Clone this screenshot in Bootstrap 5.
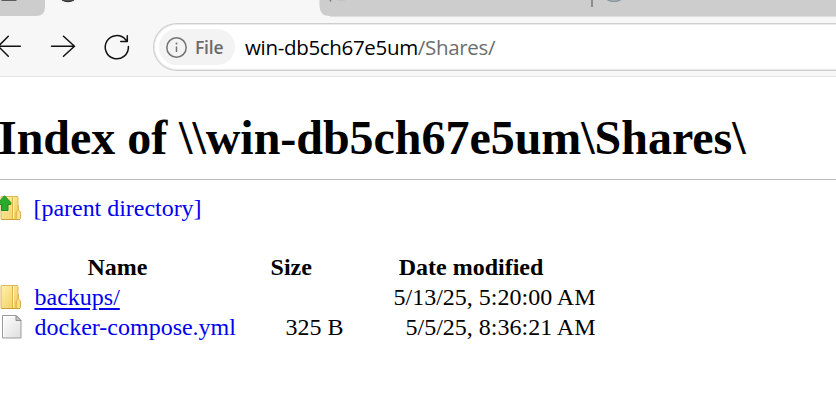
<!DOCTYPE html>
<html lang="en">
<head>
<meta charset="utf-8">
<meta name="viewport" content="width=device-width, initial-scale=1">
<title>Index of \\win-db5ch67e5um\Shares\</title>
<link href="https://cdn.jsdelivr.net/npm/bootstrap@5.3.0/dist/css/bootstrap.min.css" rel="stylesheet">
<style>
body{width:836px;height:414px;background:#fff;color:#000;font-family:"Liberation Serif","Times New Roman",serif;font-size:24px;line-height:30px}
.browser{height:77px;background:#f7f7f7;border-bottom:1px solid #e5e5e5}
.tabs{height:23px}
.tabs svg{display:block}
.tools{height:53px}
.address{width:700px;height:48px;background:#fff;border:1px solid #cecece;box-shadow:inset 0 0 0 1px #e9e9e9;border-radius:24px 0 0 24px;border-right:0;margin-right:-20px;padding-left:5px;font-family:"Open Sans","Noto Sans",sans-serif}
.scheme{width:76px;height:36px;background:#f3f3f3;border-radius:18px;padding-left:7px;color:#6b6b6b}
.scheme span{font-size:17.5px;font-weight:600;line-height:36px;margin-left:8px;letter-spacing:-.2px}
.url{font-size:20.5px;margin-left:10px;letter-spacing:-.32px;white-space:nowrap}
.url span{color:#6d6d6d}
.title{font-size:48px;font-weight:700;line-height:56px;margin:33px 0 13px -2px;padding:0;white-space:nowrap;letter-spacing:-.03px}
.rule{border-top:1px solid #bdbdbd;height:14px}
.listing a{color:#0000ee;text-decoration:none}
.listing a.current{text-decoration:underline;text-decoration-thickness:2px;text-underline-offset:3px}
.icon{width:22px;height:26px;flex:none}
.entry{margin-left:12.500px}
.parent{margin-left:11.500px;letter-spacing:-.03px}
.files{width:595.500px;table-layout:fixed;margin:29px 0 0;color:#000;line-height:30px}
.files th,.files td{padding:0;height:30px;color:#000;white-space:nowrap}
.files th:last-child{padding-left:3px}
</style>
<script src="https://cdn.jsdelivr.net/npm/bootstrap@5.3.0/dist/js/bootstrap.bundle.min.js"></script>
</head>
<body class="overflow-hidden">
<svg width="0" height="0" class="position-absolute" aria-hidden="true">
  <defs>
    <linearGradient id="gold" x1="0" x2="1" y2="1"><stop stop-color="#fdf0b0"/><stop offset="1" stop-color="#f1cc5c"/></linearGradient>
    <linearGradient id="paper" x1="0" x2="1" y2="1"><stop stop-color="#fff"/><stop offset="1" stop-color="#dedede"/></linearGradient>
    <symbol id="folder" viewBox="0 0 22 26">
      <path d="M17 10.500h1.500v4.500l2 2v6.500l-1 1h-3.500z" fill="#f8e08a" stroke="#dab04c"/>
      <path d="M2 1.500h15q1 0 1 1v12.500l-2 2v7.500h-14q-1 0-1-1v-21q0-1 1-1z" fill="url(#gold)" stroke="#deb95a"/>
      <path d="M12.500 2v22" stroke="#dfb54c"/><path d="M13.500 2.500v21" stroke="#fdf3c4"/><path d="M1.500 24.500h18.500" stroke="#cc9f3d"/>
    </symbol>
  </defs>
</svg>
<header class="browser d-flex flex-column">
  <div class="tabs">
    <svg width="836" height="17" viewBox="0 0 836 17" aria-hidden="true">
      <path d="M0 0H45V7Q45 16 36 16H0zM319.500 0H836V16H330Q319.500 16 319.500 6z" fill="#cdcdcd"/>
      <path d="M1.500 0h15" stroke="#5b5b5b" stroke-width="2"/>
      <path d="M62 0q6 3.300 12 0" fill="#555" stroke="#333" stroke-width="1.200"/>
      <path d="M330.500 0v1.500" stroke="#777" stroke-width="1.500"/>
      <path d="M337 .3h8" stroke="#c2c2c2"/>
      <path d="M592 0v7" stroke="#777" stroke-width="1.500"/>
      <path d="M607.500 0q6.500 3 13 0" fill="#a3adb3" stroke="#84949e" stroke-width="1.200"/>
      <path d="M330 16.500H836" stroke="#dedede"/>
    </svg>
  </div>
  <div class="tools d-flex align-items-start">
    <svg width="153" height="48" viewBox="0 23 153 48" fill="none" stroke="#111" stroke-width="1.500" stroke-linecap="round" stroke-linejoin="round" aria-label="Back, forward, refresh">
      <path d="M-1 46.300H20.300M8.300 36.300L-1.700 46.300L8.300 56.300M51.500 46.300H74.500M63.500 36.300L74.500 46.300L63.500 56.300"/>
      <path d="M128.400 46.500A11.600 11.600 0 1 1 125.500 39.500L127.300 41.400M127.300 35.700V41.400H120.800"/>
    </svg>
    <div class="address d-flex align-items-center flex-shrink-0">
      <div class="scheme d-flex align-items-center">
        <svg width="21" height="21" viewBox="0 0 21 21" fill="none" stroke="#737373" stroke-width="1.500" aria-hidden="true"><circle cx="10.500" cy="10.500" r="9.700"/><path d="M10.500 9.500v5.500"/><circle cx="10.500" cy="6.500" r="1" fill="#737373" stroke="none"/></svg>
        <span>File</span>
      </div>
      <div class="url">win-db5ch67e5um<span>/Shares/</span></div>
    </div>
  </div>
</header>
<main class="listing">
  <h1 class="title">Index of \\win-db5ch67e5um\Shares\</h1>
  <div class="rule"></div>
  <div class="d-flex align-items-center">
    <svg class="icon" viewBox="0 0 22 26" aria-hidden="true"><use href="#folder"/><path d="M4.500 .800L10.800 7.500V9.500H8V15.500H1.500V9.500H-1.500V7.500z" fill="#2caa2c" stroke="#1a8c1f"/></svg>
    <a href="#" class="parent">[parent directory]</a>
  </div>
  <table class="table table-borderless files align-middle">
    <colgroup><col style="width:235px"><col style="width:108.500px"><col style="width:252px"></colgroup>
    <thead><tr><th class="text-center">Name</th><th class="text-center ps-1">Size</th><th class="text-center">Date modified</th></tr></thead>
    <tbody>
      <tr><td><div class="d-flex align-items-center"><svg class="icon" aria-hidden="true"><use href="#folder"/></svg><a href="#" class="current entry">backups/</a></div></td><td></td><td class="text-end">5/13/25, 5:20:00 AM</td></tr>
      <tr><td><div class="d-flex align-items-center"><svg class="icon" viewBox="0 0 22 26" aria-hidden="true"><path d="M2.500 1.500h13.500l5 5v17.500h-18.500z" fill="url(#paper)" stroke="#9a9a9a"/><path d="M3.500 2.500h12M3.500 2.500v20.500" stroke="#fff"/><path d="M16 1.500v5h5z" fill="#c4c4c4" stroke="#8d8d8d"/></svg><a href="#" class="entry">docker-compose.yml</a></div></td><td class="text-end">325 B</td><td class="text-end">5/5/25, 8:36:21 AM</td></tr>
    </tbody>
  </table>
</main>
</body>
</html>
